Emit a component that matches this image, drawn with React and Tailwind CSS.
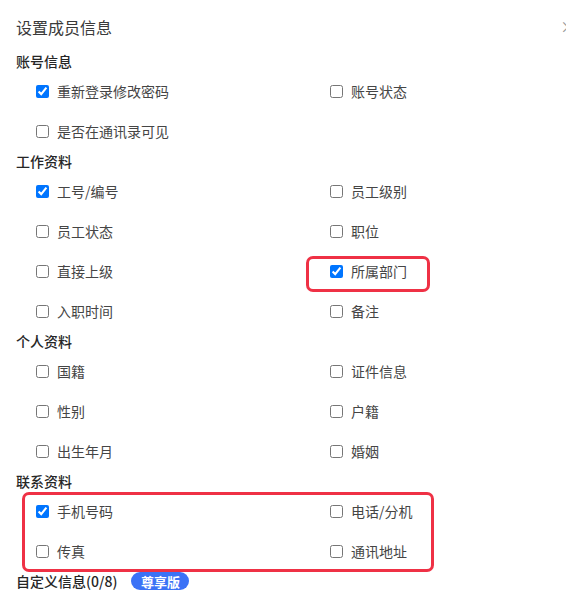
import React from "react";

const sections = [
  {
    title: "账号信息",
    rows: [
      [{ t: "重新登录修改密码", c: true }, { t: "账号状态" }],
      [{ t: "是否在通讯录可见" }, null],
    ],
  },
  {
    title: "工作资料",
    rows: [
      [{ t: "工号/编号", c: true }, { t: "员工级别" }],
      [{ t: "员工状态" }, { t: "职位" }],
      [{ t: "直接上级" }, { t: "所属部门", c: true }],
      [{ t: "入职时间" }, { t: "备注" }],
    ],
  },
  {
    title: "个人资料",
    rows: [
      [{ t: "国籍" }, { t: "证件信息" }],
      [{ t: "性别" }, { t: "户籍" }],
      [{ t: "出生年月" }, { t: "婚姻" }],
    ],
  },
  {
    title: "联系资料",
    rows: [
      [{ t: "手机号码", c: true }, { t: "电话/分机" }],
      [{ t: "传真" }, { t: "通讯地址" }],
    ],
  },
];

function Item({ item }) {
  if (!item) return <div />;
  return (
    <label className="flex items-center gap-[8px] h-10">
      <input
        type="checkbox"
        defaultChecked={!!item.c}
        className="w-[13px] h-[13px] shrink-0"
      />
      <span className="text-[14px] leading-[20px] text-[#454545]">{item.t}</span>
    </label>
  );
}

export default function App() {
  return (
    <div
      className="relative w-[566px] h-[602px] overflow-hidden bg-white"
      style={{ fontFamily: '"Noto Sans CJK SC", "Microsoft YaHei", sans-serif' }}
    >
      <div className="px-4">
        <div className="pt-[16px] pb-[13px] text-[16px] leading-[22px] text-[#3a3a3a]">
          设置成员信息
        </div>
        {sections.map((s) => (
          <div key={s.title}>
            <div className="h-5 flex items-center text-[14px] font-medium text-[#262626]">
              {s.title}
            </div>
            <div className="pl-5 grid grid-cols-[294px_1fr]">
              {s.rows.map((r, i) => (
                <React.Fragment key={i}>
                  <Item item={r[0]} />
                  <Item item={r[1]} />
                </React.Fragment>
              ))}
            </div>
          </div>
        ))}
        <div className="h-5 flex items-center gap-[14px]">
          <span className="text-[14px] font-medium text-[#262626]">自定义信息(0/8)</span>
          <span className="h-[18px] w-[58px] rounded-full bg-[#3b72f6] text-white text-[13px] font-bold flex items-center justify-center leading-none">
            尊享版
          </span>
        </div>
      </div>

      <span className="absolute left-[560px] top-[14px] text-[16px] text-[#999]">×</span>

      <div className="absolute left-[306px] top-[256px] w-[124px] h-[36px] border-[3px] border-[#ef3145] rounded-[7px]" />
      <div className="absolute left-[22px] top-[492px] w-[412px] h-[80px] border-[3px] border-[#ef3145] rounded-[7px]" />
    </div>
  );
}
